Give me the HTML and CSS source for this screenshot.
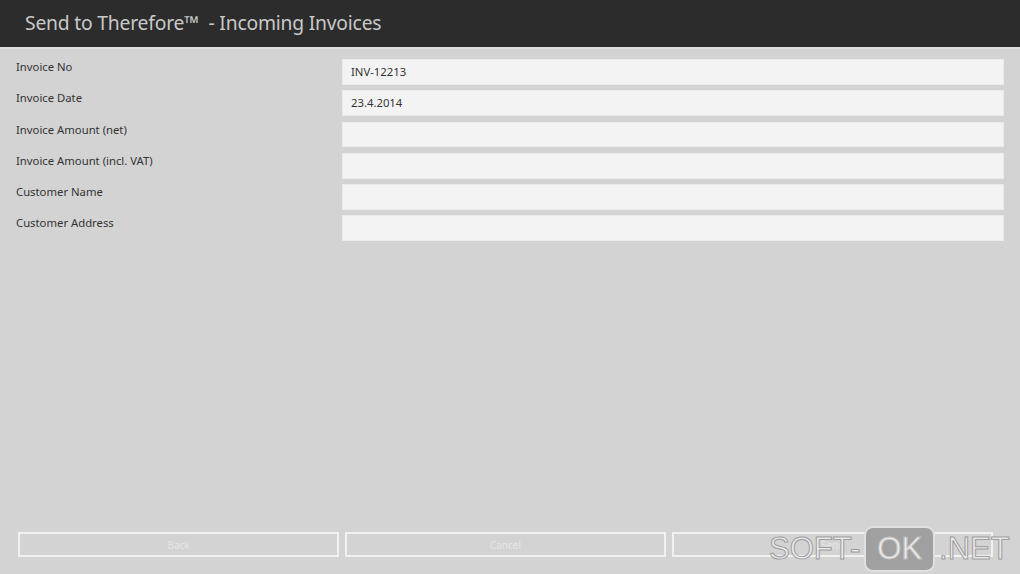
FILE: index.html
```html
<!DOCTYPE html>
<html>
<head>
<meta charset="utf-8">
<link rel="stylesheet" href="styles.css">
</head>
<body>
<div class="app">
  <header class="header">
    <h1 class="title">Send to Therefore™&nbsp; - Incoming Invoices</h1>
  </header>
  <main class="form">
    <div class="row"><label class="label">Invoice No</label><div class="field">INV-12213</div></div>
    <div class="row"><label class="label">Invoice Date</label><div class="field">23.4.2014</div></div>
    <div class="row"><label class="label">Invoice Amount (net)</label><div class="field"></div></div>
    <div class="row"><label class="label">Invoice Amount (incl. VAT)</label><div class="field"></div></div>
    <div class="row"><label class="label">Customer Name</label><div class="field"></div></div>
    <div class="row"><label class="label">Customer Address</label><div class="field"></div></div>
  </main>
  <footer class="buttons">
    <button class="btn">Back</button>
    <button class="btn">Cancel</button>
    <button class="btn">Send</button>
  </footer>
  <div class="watermark"><span class="wm-text">SOFT-</span><span class="wm-box">OK</span><span class="wm-text">.NET</span></div>
</div>
</body>
</html>
```

FILE: styles.css
```css
* { box-sizing: border-box; }
html, body { margin: 0; padding: 0; }
body {
  width: 1020px;
  height: 574px;
  overflow: hidden;
  background: #d3d3d3;
  font-family: "Noto Sans", "Open Sans", sans-serif;
}
.app {
  position: relative;
  width: 1020px;
  height: 574px;
  display: flex;
  flex-direction: column;
}
.header {
  height: 49px;
  background: #2c2c2c;
  border-bottom: 2px solid #dcdcdc;
  display: flex;
  align-items: center;
  padding-left: 25px;
  flex: none;
}
.title {
  margin: 0;
  font-weight: 400;
  font-size: 19.3px;
  color: #c9c9c9;
  letter-spacing: -0.2px;
  padding-bottom: 2px;
}
.form {
  flex: 1;
  padding: 10px 16px 0 16px;
  display: flex;
  flex-direction: column;
  gap: 5.6px;
}
.row {
  display: flex;
  align-items: flex-start;
  height: 25.7px;
}
.label {
  width: 326px;
  flex: none;
  font-size: 11.3px;
  color: #333;
  line-height: 14px;
  padding-top: 1px;
}
.field {
  width: 662px;
  height: 25.7px;
  background: #f3f3f3;
  border: 1px solid #ebebeb;
  font-size: 11.3px;
  color: #333;
  display: flex;
  align-items: center;
  padding-left: 8px;
  padding-bottom: 1px;
}
.buttons {
  flex: none;
  display: flex;
  gap: 6px;
  padding: 0 18px 17px 18px;
}
.btn {
  width: 321px;
  height: 25px;
  background: transparent;
  border: 2px solid #f1f1f1;
  font-family: "Noto Sans", "Open Sans", sans-serif;
  font-size: 10px;
  color: #e6e6e6;
  padding: 0;
}
.watermark {
  position: absolute;
  left: 769px;
  top: 526px;
  display: flex;
  align-items: center;
  gap: 4px;
  font-family: "Liberation Sans", Arial, sans-serif;
  font-size: 31px;
}
.wm-text {
  color: #ececec;
  -webkit-text-stroke: 1px #9c9c9c;
}
.wm-box {
  background: #a0a0a0;
  border: 2px solid #e0e0e0;
  border-radius: 9px;
  color: #eeeeee;
  padding: 4px 11px;
  line-height: 34px;
  -webkit-text-stroke: 1px #bdbdbd;
}
```
